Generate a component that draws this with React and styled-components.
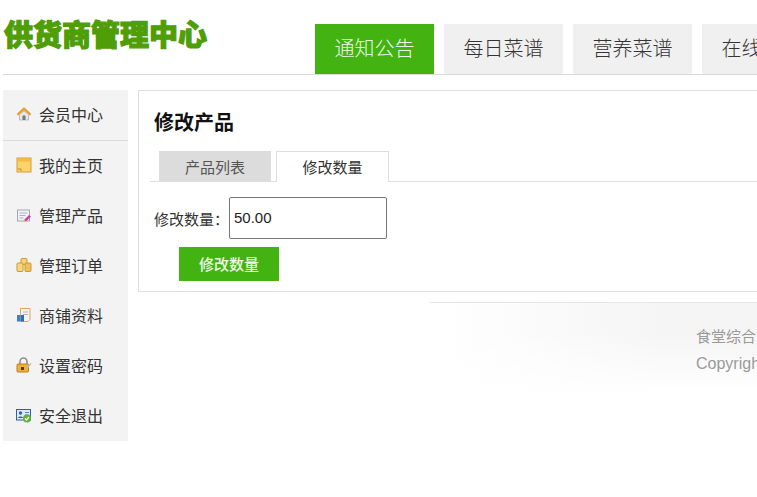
import styled, { createGlobalStyle } from 'styled-components';

const GlobalStyle = createGlobalStyle`
  html, body {
    margin: 0;
    padding: 0;
    background: #fff;
    overflow: hidden;
  }
  body {
    font-family: "Liberation Sans", "Noto Sans CJK SC", sans-serif;
    color: #333;
  }
`;

const Page = styled.div`
  width: 757px;
  height: 497px;
  overflow: hidden;
`;

const Inner = styled.div`
  width: 1200px;
  padding-left: 3px;
  box-sizing: border-box;
`;

const Header = styled.header`
  display: flex;
  align-items: flex-start;
  height: 75px;
  border-bottom: 1px solid #d9d9d9;
  box-sizing: border-box;
`;

const Logo = styled.h1`
  margin: 17px 0 0 1px;
  width: 311px;
  font-size: 29px;
  line-height: 38px;
  font-weight: 900;
  color: #4f9e08;
  -webkit-text-stroke: 1.2px #4f9e08;
  paint-order: stroke fill;
  white-space: nowrap;
`;

const Nav = styled.nav`
  display: flex;
  gap: 10px;
  margin-top: 24px;
`;

const NavItem = styled.a`
  width: 119px;
  height: 50px;
  line-height: 51px;
  text-align: center;
  font-size: 20px;
  font-weight: 300;
  background: ${({ $active }) => ($active ? '#43b312' : '#f0f0f0')};
  color: ${({ $active }) => ($active ? '#eef9e8' : '#333')};
`;

const Body = styled.div`
  display: flex;
  align-items: flex-start;
  gap: 10px;
  margin-top: 15px;
`;

const Sidebar = styled.ul`
  list-style: none;
  margin: 0;
  padding: 0;
  width: 125px;
  height: 351px;
  background: #f3f3f3;
  flex: none;
`;

const SideItem = styled.li`
  display: flex;
  align-items: center;
  gap: 7px;
  height: 50px;
  padding: 0 0 2px 13px;
  box-sizing: border-box;
  font-size: 16px;
  color: #333;
  ${({ $first }) => $first && 'height: 51px; border-bottom: 1px solid #dcdcdc;'}
`;

const IconBox = styled.svg`
  width: 16px;
  height: 16px;
  flex: none;
`;

const Content = styled.div`
  flex: 1;
  min-width: 0;
`;

const Panel = styled.section`
  height: 202px;
  border: 1px solid #dedede;
  box-sizing: border-box;
  padding: 0 0 0 11px;
`;

const Title = styled.h2`
  margin: 18px 0 0 4px;
  font-size: 20px;
  line-height: 28px;
  font-weight: bold;
  color: #111;
`;

const Tabs = styled.div`
  display: flex;
  align-items: flex-end;
  gap: 5px;
  height: 31px;
  margin-top: 14px;
  padding-left: 9px;
  border-bottom: 1px solid #dedede;
  box-sizing: border-box;
`;

const Tab = styled.div`
  text-align: center;
  font-size: 15px;
  box-sizing: border-box;
  ${({ $active }) =>
    $active
      ? `
    width: 113px;
    height: 31px;
    line-height: 32px;
    background: #fff;
    border: 1px solid #dedede;
    border-bottom: 0;
    margin-bottom: -1px;
    color: #333;
  `
      : `
    width: 112px;
    height: 30px;
    line-height: 33px;
    background: #dcdcdc;
    color: #555;
  `}
`;

const FormRow = styled.div`
  display: flex;
  align-items: center;
  margin: 15px 0 0 4px;
`;

const Label = styled.label`
  width: 75px;
  font-size: 15px;
  color: #333;
  white-space: nowrap;
`;

const Input = styled.input`
  width: 158px;
  height: 42px;
  padding: 0 3px 2px 4px;
  box-sizing: border-box;
  border: 1px solid #767676;
  border-radius: 2px;
  font-family: "Liberation Sans", "Noto Sans CJK SC", sans-serif;
  font-size: 15px;
  color: #222;
  background: #fff;
`;

const SubmitButton = styled.button`
  display: block;
  width: 100px;
  height: 34px;
  margin: 8px 0 0 29px;
  border: 0;
  padding: 0 0 2px;
  background: #43b312;
  color: #eefae6;
  font-family: "Liberation Sans", "Noto Sans CJK SC", sans-serif;
  font-size: 15px;
  font-weight: 500;
`;

const Footer = styled.footer`
  margin: 10px 0 0 292px;
  height: 94px;
  padding: 20px 0 0 266px;
  box-sizing: border-box;
  border-top: 1px solid #e6e6e6;
  background:
    linear-gradient(180deg, rgba(255, 255, 255, 0) 30%, #fff 100%),
    linear-gradient(90deg, #fff 10px, #f5f5f5 230px, #f5f5f5 100%);
  color: #999;
  white-space: nowrap;
`;

const FooterLine = styled.div`
  line-height: 27px;
  font-size: ${({ $size }) => $size}px;
`;

const HomeIcon = () => (
  <IconBox viewBox="0 0 16 16">
    <path d="M8 1.5 1 8l1 1.2L8 4l6 5.2L15 8z" fill="#efa31d" stroke="#d98a10" strokeWidth=".5" />
    <path d="M3.5 8.5 8 4.8l4.5 3.7V14h-9z" fill="#e8e8e8" stroke="#9a9a9a" strokeWidth=".6" />
    <rect x="6.5" y="9.5" width="3" height="4.5" fill="#777" />
  </IconBox>
);

const PageIcon = () => (
  <IconBox viewBox="0 0 16 16">
    <rect x="1" y="1" width="14" height="14" fill="#fbd36b" stroke="#d99a35" />
    <rect x="1.5" y="1.5" width="13" height="3" fill="#f5b945" />
    <path d="M2 12h3v2" fill="none" stroke="#c98a2a" />
  </IconBox>
);

const ProductIcon = () => (
  <IconBox viewBox="0 0 16 16">
    <rect x="1.5" y="3" width="12" height="11" fill="#f2f2f6" stroke="#a3a8b8" />
    <path d="M3.5 6h8M3.5 8.5h6M3.5 11h4" stroke="#a9b3c6" />
    <path d="m8 13 5-5 2 1.5-5 5z" fill="#c53fb0" />
    <path d="m8 13-1 2 3-.5z" fill="#f0c040" />
  </IconBox>
);

const OrderIcon = () => (
  <IconBox viewBox="0 0 16 16">
    <rect x="5" y="1.5" width="6" height="6" rx="1" fill="#f6d272" stroke="#c9993a" />
    <rect x="1" y="6" width="6" height="8.5" rx="1" fill="#f8d67c" stroke="#c9993a" />
    <rect x="9" y="6" width="6" height="8.5" rx="1" fill="#f0bf55" stroke="#c9993a" />
  </IconBox>
);

const ShopIcon = () => (
  <IconBox viewBox="0 0 16 16">
    <path d="M4.5 1.5h9.5v11l-2 2H4.5z" fill="#f8f3ea" stroke="#d9a566" />
    <path d="M7 5h5M7 7.5h5" stroke="#a9b3c6" />
    <rect x="1" y="8" width="3.5" height="6.5" fill="#3a7fd0" />
    <rect x="5" y="8" width="3" height="6.5" fill="#2f6bb8" />
  </IconBox>
);

const LockIcon = () => (
  <IconBox viewBox="0 0 16 16">
    <path d="M4 7V4.5a3.5 3.5 0 0 1 7 0V7" fill="none" stroke="#8f8f8f" strokeWidth="1.6" />
    <rect x="1" y="7" width="11.5" height="8" rx="1" fill="#eeb03a" stroke="#c27f18" />
    <rect x="5" y="10" width="3" height="3" fill="#5a3d10" />
    <path d="m10 11 4.5-5 1 1-4.5 5z" fill="#bbb" />
  </IconBox>
);

const LogoutIcon = () => (
  <IconBox viewBox="0 0 16 16">
    <rect x="0.5" y="2.5" width="14" height="10.5" fill="#dfeaf8" stroke="#2f5f9e" />
    <circle cx="4.5" cy="6" r="1.7" fill="#3a5f8f" />
    <path d="M2 11c.3-2 4.7-2 5 0z" fill="#3a5f8f" />
    <path d="M9 5.5h4M9 8h4" stroke="#5a84ba" />
    <circle cx="11" cy="11.5" r="4" fill="#62b13a" />
    <path d="m9 11.5 1.5 1.5 2.5-3" fill="none" stroke="#fff" strokeWidth="1.2" />
  </IconBox>
);

const menu = [
  { label: '会员中心', icon: HomeIcon },
  { label: '我的主页', icon: PageIcon },
  { label: '管理产品', icon: ProductIcon },
  { label: '管理订单', icon: OrderIcon },
  { label: '商铺资料', icon: ShopIcon },
  { label: '设置密码', icon: LockIcon },
  { label: '安全退出', icon: LogoutIcon },
];

const navItems = ['通知公告', '每日菜谱', '营养菜谱', '在线订餐'];

const App = () => (
  <Page>
    <GlobalStyle />
    <Inner>
      <Header>
        <Logo>供货商管理中心</Logo>
        <Nav>
          {navItems.map((n, i) => (
            <NavItem key={n} $active={i === 0}>{n}</NavItem>
          ))}
        </Nav>
      </Header>
      <Body>
        <Sidebar>
          {menu.map(({ label, icon: Icon }, i) => (
            <SideItem key={label} $first={i === 0}>
              <Icon />
              {label}
            </SideItem>
          ))}
        </Sidebar>
        <Content>
          <Panel>
            <Title>修改产品</Title>
            <Tabs>
              <Tab>产品列表</Tab>
              <Tab $active>修改数量</Tab>
            </Tabs>
            <FormRow>
              <Label>修改数量：</Label>
              <Input defaultValue="50.00" />
            </FormRow>
            <SubmitButton>修改数量</SubmitButton>
          </Panel>
          <Footer>
            <FooterLine $size={15}>食堂综合管理平台</FooterLine>
            <FooterLine $size={16}>Copyright</FooterLine>
          </Footer>
        </Content>
      </Body>
    </Inner>
  </Page>
);

export default App;
